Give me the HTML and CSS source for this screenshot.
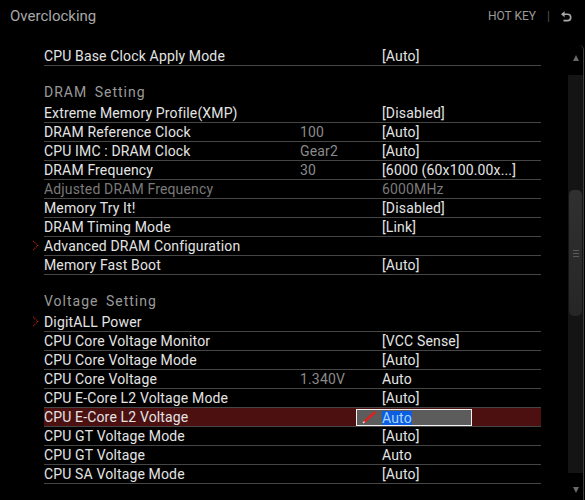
FILE: index.html
```html
<!DOCTYPE html>
<html lang="en">
<head>
  <meta charset="UTF-8" />
  <title>Overclocking</title>
  <link rel="stylesheet" href="styles.css">
</head>
<body>
  <div class="topbar">
    <div class="title">Overclocking</div>
    <div class="hotkey">
      <span>HOT KEY</span>
      <span class="bar">|</span>
      <svg class="back" width="11" height="11" viewBox="0 0 11 11">
        <path d="M1 3.2 H6.5 A3.2 3.2 0 0 1 6.5 9.6 H2.5" fill="none" stroke="#aaa" stroke-width="1.6"/>
        <path d="M0 3.2 L3.6 0.2 L3.6 6.2 Z" fill="#aaa"/>
      </svg>
    </div>
  </div>

  <div class="main">
    <div class="list">
      <div class="row"><span class="name">CPU Base Clock Apply Mode</span><span class="cur"></span><span class="val">[Auto]</span></div>

      <div class="section">DRAM Setting</div>
      <div class="row"><span class="name">Extreme Memory Profile(XMP)</span><span class="cur"></span><span class="val">[Disabled]</span></div>
      <div class="row"><span class="name">DRAM Reference Clock</span><span class="cur">100</span><span class="val">[Auto]</span></div>
      <div class="row"><span class="name">CPU IMC : DRAM Clock</span><span class="cur">Gear2</span><span class="val">[Auto]</span></div>
      <div class="row"><span class="name">DRAM Frequency</span><span class="cur">30</span><span class="val">[6000 (60x100.00x...]</span></div>
      <div class="row dim"><span class="name">Adjusted DRAM Frequency</span><span class="cur"></span><span class="val">6000MHz</span></div>
      <div class="row"><span class="name">Memory Try It!</span><span class="cur"></span><span class="val">[Disabled]</span></div>
      <div class="row"><span class="name">DRAM Timing Mode</span><span class="cur"></span><span class="val">[Link]</span></div>
      <div class="row sub"><span class="name">Advanced DRAM Configuration</span><span class="cur"></span><span class="val"></span></div>
      <div class="row"><span class="name">Memory Fast Boot</span><span class="cur"></span><span class="val">[Auto]</span></div>

      <div class="section">Voltage Setting</div>
      <div class="row sub"><span class="name">DigitALL Power</span><span class="cur"></span><span class="val"></span></div>
      <div class="row"><span class="name">CPU Core Voltage Monitor</span><span class="cur"></span><span class="val">[VCC Sense]</span></div>
      <div class="row"><span class="name">CPU Core Voltage Mode</span><span class="cur"></span><span class="val">[Auto]</span></div>
      <div class="row"><span class="name">CPU Core Voltage</span><span class="cur">1.340V</span><span class="val">Auto</span></div>
      <div class="row"><span class="name">CPU E-Core L2 Voltage Mode</span><span class="cur"></span><span class="val">[Auto]</span></div>
      <div class="row active">
        <span class="name">CPU E-Core L2 Voltage</span><span class="cur"></span><span class="val"></span>
        <div class="editbox">
          <svg class="pencil" width="14" height="13" viewBox="0 0 14 13">
            <path d="M2.2 10.8 L12.5 1.5" stroke="#e0201c" stroke-width="2.4" stroke-linecap="round"/>
            <path d="M1 12 L2.6 10.5" stroke="#f4d0d0" stroke-width="1.4"/>
          </svg>
          <span class="sel">Auto</span>
        </div>
      </div>
      <div class="row"><span class="name">CPU GT Voltage Mode</span><span class="cur"></span><span class="val">[Auto]</span></div>
      <div class="row"><span class="name">CPU GT Voltage</span><span class="cur"></span><span class="val">Auto</span></div>
      <div class="row"><span class="name">CPU SA Voltage Mode</span><span class="cur"></span><span class="val">[Auto]</span></div>
    </div>

    <div class="scroll">
      <div class="arrow up"></div>
      <div class="track">
        <div class="thumb"><i></i><i></i><i></i></div>
      </div>
      <div class="arrow down"></div>
    </div>
  </div>
</body>
</html>
```

FILE: styles.css
```css
body {
  margin: 0;
  width: 585px;
  height: 500px;
  overflow: hidden;
  background: #000;
  color: #e4e4e4;
  font-family: Roboto, 'Liberation Sans', sans-serif;
  font-size: 14px;
}
.topbar {
  display: flex;
  justify-content: space-between;
  align-items: center;
  height: 32px;
  padding: 0 13px 0 10px;
}
.title {
  font-size: 15px;
  color: #a8a8a8;
}
.hotkey {
  display: flex;
  align-items: center;
  gap: 11px;
  font-size: 12px;
  color: #9a9a9a;
}
.hotkey .bar {
  color: #555;
}
.main {
  display: flex;
}
.list {
  width: 497px;
  margin-left: 44px;
  padding-top: 15px;
}
.row {
  position: relative;
  display: flex;
  height: 18px;
  line-height: 18px;
  border-bottom: 1px solid #464646;
  white-space: nowrap;
  letter-spacing: 0.15px;
}
.row .name {
  width: 256px;
}
.row .cur {
  width: 82px;
  color: #8a8a8a;
}
.row.dim {
  color: #7a7a7a;
}
.row.sub::before {
  content: "";
  position: absolute;
  left: -14px;
  top: 5px;
  width: 6px;
  height: 6px;
  border-top: 1.5px dotted #d0241c;
  border-right: 1.5px dotted #d0241c;
  transform: rotate(45deg);
}
.row.active {
  background: #4c1011;
}
.section {
  padding: 17px 0 3px;
  height: 18px;
  line-height: 18px;
  color: #9a9a9a;
  letter-spacing: 1px;
  word-spacing: 3px;
}
.editbox {
  position: absolute;
  left: 312px;
  top: 1px;
  width: 109px;
  height: 15px;
  display: flex;
  align-items: center;
  gap: 6px;
  padding-left: 5px;
  background: #5c5c5c;
  border: 1.5px solid #f2f2f2;
}
.sel {
  background: #0b5ee0;
  color: #a8d4ff;
  line-height: 14px;
}
.scroll {
  width: 15px;
  margin-left: 27px;
  margin-top: 13px;
  height: 455px;
  border-right: 1px solid #3c3c3c;
  border-top-right-radius: 5px;
  display: flex;
  flex-direction: column;
  align-items: center;
}
.arrow {
  width: 0;
  height: 0;
  border-left: 3.5px solid transparent;
  border-right: 3.5px solid transparent;
}
.arrow.up {
  margin: 10px 0 14px;
  border-bottom: 6px solid #6a6a6a;
}
.arrow.down {
  margin-top: 14px;
  border-top: 6px solid #6a6a6a;
}
.track {
  width: 15px;
  height: 398px;
  background: #141414;
  padding-top: 115px;
  box-sizing: border-box;
}
.thumb {
  width: 13px;
  height: 126px;
  margin-left: 1px;
  border-radius: 5px;
  background: linear-gradient(#303030, #262626);
  display: flex;
  flex-direction: column;
  justify-content: center;
  align-items: center;
  gap: 2px;
}
.thumb i {
  display: block;
  width: 6px;
  height: 1px;
  background: #5a5a5a;
}
```
